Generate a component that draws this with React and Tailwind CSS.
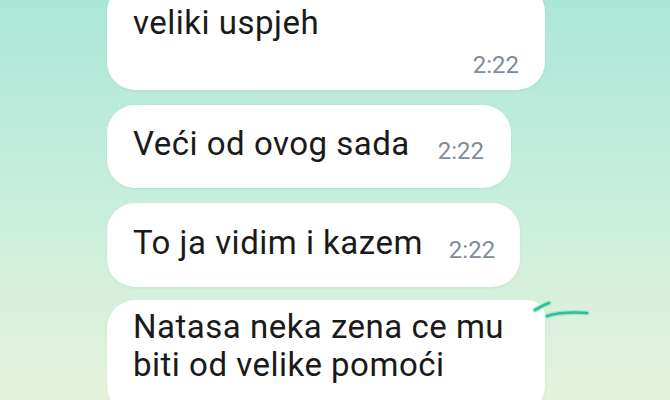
const font = { fontFamily: 'Roboto, "Noto Sans", sans-serif' }

function Time({ children }) {
  return (
    <span className="text-[24px] leading-[24px] text-[#7f8c99] shrink-0">{children}</span>
  )
}

function Bubble({ children, className = '' }) {
  return (
    <div className={`bg-white rounded-[28px] shadow-[0_1px_3px_rgba(40,90,70,0.08)] ${className}`}>
      {children}
    </div>
  )
}

export default function App() {
  return (
    <div
      className="w-[670px] h-[400px] overflow-hidden bg-linear-to-b from-[#abe7d8] via-[#c8eedd] to-[#e6f2dc] text-[#1a1a1a]"
      style={font}
    >
      <div className="flex flex-col items-start pl-[107px] gap-[15px]">
        <Bubble className="w-[438px] -mt-[16px] pt-[20px] pb-[11px] pl-[26px] pr-[26px]">
          <p className="text-[33px] leading-[38px] tracking-[0.5px]">veliki uspjeh</p>
          <div className="flex justify-end mt-[9px] h-[28px] items-center">
            <Time>2:22</Time>
          </div>
        </Bubble>

        <Bubble className="flex items-end gap-[28px] pt-[20px] pb-[25px] pl-[26px] pr-[27px]">
          <p className="text-[33px] leading-[38px] tracking-[0.5px]">Veći od ovog sada</p>
          <Time>2:22</Time>
        </Bubble>

        <Bubble className="flex items-end gap-[26px] pt-[21px] pb-[25px] pl-[26px] pr-[25px]">
          <p className="text-[33px] leading-[38px] tracking-[0.5px]">To ja vidim i kazem</p>
          <Time>2:22</Time>
        </Bubble>

        <div className="relative -mt-[2px]">
          <Bubble className="w-[438px] rounded-tr-[16px] pt-[8px] pb-[30px] pl-[26px] pr-[26px]">
            <p className="text-[33px] leading-[38px] tracking-[0.5px]">
              Natasa neka zena ce mu
              <br />
              biti od velike pomoći
            </p>
          </Bubble>
          <svg
            className="absolute left-[424px] -top-[2px]"
            width="60"
            height="22"
            viewBox="0 0 60 22"
            fill="none"
          >
            <path d="M4 12 C8 10 12 7 18 5" stroke="#9fe6cf" strokeWidth="5" strokeLinecap="round" />
            <path d="M16 18 C26 15 40 14 56 15" stroke="#9fe6cf" strokeWidth="5" strokeLinecap="round" />
            <path d="M4 12 C8 10 12 7 18 5" stroke="#2fbf98" strokeWidth="2.5" strokeLinecap="round" />
            <path d="M16 18 C26 15 40 14 56 15" stroke="#2fbf98" strokeWidth="2.5" strokeLinecap="round" />
          </svg>
        </div>
      </div>
    </div>
  )
}
